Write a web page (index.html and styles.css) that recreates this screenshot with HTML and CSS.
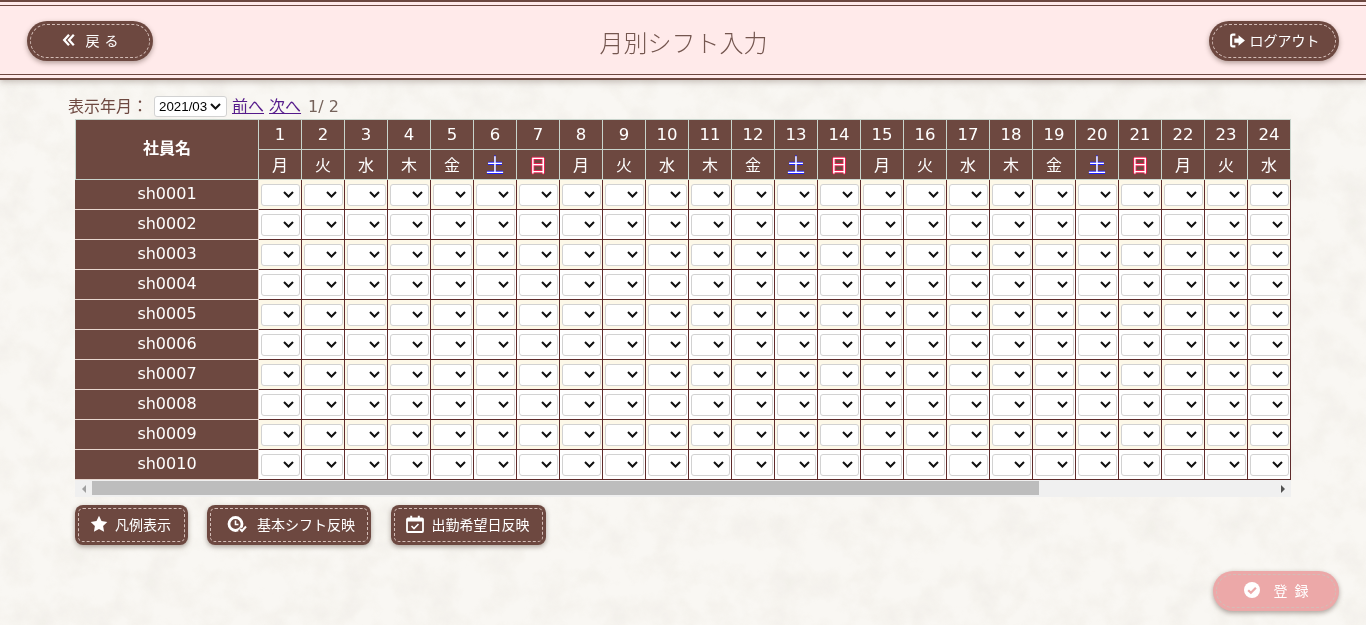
FILE: index.html
```html
<!DOCTYPE html>
<html lang="ja">
  <head>
    <meta charset="UTF-8" />
    <meta name="viewport" content="width=device-width, initial-scale=1.0" />
    <title>月別シフト入力</title>
    <link rel="stylesheet" href="styles.css">
  </head>
  <body>
    <svg class="paper" aria-hidden="true">
      <filter id="grain">
        <feTurbulence type="fractalNoise" baseFrequency="0.035" numOctaves="5" seed="7" />
        <feColorMatrix values="0 0 0 0 0.6  0 0 0 0 0.55  0 0 0 0 0.45  0.26 0 0 0 -0.1" />
      </filter>
      <rect width="100%" height="100%" filter="url(#grain)" />
    </svg>

    <header class="header">
      <div class="header-inner">
        <a class="btn btn-head btn-back" href="#">
          <svg class="icon" viewBox="0 0 16 16" width="14" height="14"><path d="M8 2 2.500 8 8 14M13.500 2 8 8l5.500 6" fill="none" stroke="currentColor" stroke-width="2.600" /></svg>
          <span class="spaced">戻る</span>
        </a>
        <h1 class="title">月別シフト入力</h1>
        <a class="btn btn-head btn-logout" href="#">
          <svg class="icon" viewBox="0 0 16 16" width="17" height="17"><path d="M6 2.500H3.500A1.500 1.500 0 0 0 2 4v8a1.500 1.500 0 0 0 1.500 1.500H6" fill="none" stroke="currentColor" stroke-width="2" /><path d="M9 3l6 5-6 5v-3H5V6h4z" fill="currentColor" /></svg>
          <span>ログアウト</span>
        </a>
      </div>
    </header>

    <main class="content">
      <div class="month-nav">
        <label for="month">表示年月：</label>
        <select id="month" class="month-select">
          <option>2021/03</option>
        </select>
        <a href="#">前へ</a>
        <a href="#">次へ</a>
        <span class="page">1/ 2</span>
      </div>

      <div class="table-wrap">
        <table class="shift-table" id="shift"></table>
      </div>
      <div class="scrollbar" aria-hidden="true">
        <span class="scroll-arrow scroll-left"></span>
        <span class="scroll-track"><span class="scroll-thumb"></span></span>
        <span class="scroll-arrow scroll-right"></span>
      </div>

      <div class="actions">
        <a class="btn btn-sub btn-legend" href="#">
          <svg class="icon" viewBox="0 0 18 18" width="18" height="18"><path d="M9 .8l2.500 5.300 5.800.8-4.200 4 1 5.800L9 14.100l-5.100 2.600 1-5.800-4.200-4 5.800-.8z" fill="currentColor" /></svg>
          <span>凡例表示</span>
        </a>
        <a class="btn btn-sub btn-basic" href="#">
          <svg class="icon" viewBox="0 0 21 18" width="21" height="18"><circle cx="8.500" cy="9" r="6.500" fill="none" stroke="currentColor" stroke-width="2.800" /><path d="M8.500 5.500V9.500h3" fill="none" stroke="currentColor" stroke-width="1.600" /><path d="M12.500 14l2.500 2.500 4.500-5" fill="none" stroke="#6d4840" stroke-width="4" /><path d="M13 14l2 2 4-4.500" fill="none" stroke="currentColor" stroke-width="2" /></svg>
          <span>基本シフト反映</span>
        </a>
        <a class="btn btn-sub btn-wish" href="#">
          <svg class="icon" viewBox="0 0 18 18" width="18" height="18"><path d="M2 3.500h14a1 1 0 0 1 1 1V16a1 1 0 0 1-1 1H2a1 1 0 0 1-1-1V4.500a1 1 0 0 1 1-1z" fill="none" stroke="currentColor" stroke-width="1.800" /><path d="M1 4h16v2.500H1zM4.200.8h2v4h-2zM11.800.8h2v4h-2z" fill="currentColor" /><path d="M5.500 11l2.500 2.500 4.500-4.500" fill="none" stroke="currentColor" stroke-width="1.600" /></svg>
          <span>出勤希望日反映</span>
        </a>
      </div>

      <div class="submit-row">
        <a class="btn btn-submit" href="#">
          <svg class="icon" viewBox="0 0 16 16" width="16" height="16"><circle cx="8" cy="8" r="8" fill="currentColor" /><path d="M4.200 8.200l2.700 2.600 5-5" fill="none" stroke="#eca8a8" stroke-width="2.200" /></svg>
          <span class="spaced-wide">登録</span>
        </a>
      </div>
    </main>

    <script src="script.js"></script>
  </body>
</html>
```

FILE: styles.css
```css
* {
  box-sizing: border-box;
}

html,
body {
  height: 100%;
}

body {
  margin: 0;
  overflow: hidden;
  background-color: #f9f7f3;
  color: #6d4840;
  font-family: "DejaVu Sans", "Noto Sans CJK JP", sans-serif;
  font-size: 16px;
}

.paper {
  position: fixed;
  top: 0;
  left: 0;
  width: 100%;
  height: 100%;
  z-index: -1;
}

.header {
  height: 80px;
  border-top: 2px solid #6d4840;
  border-bottom: 2px solid #6d4840;
  background-color: #ffeaea;
  box-shadow: 0 2px 6px rgba(80, 60, 50, 0.3);
}

.header-inner {
  display: flex;
  align-items: center;
  justify-content: space-between;
  height: 70px;
  margin-top: 3px;
  padding: 2px 27px 0;
  border-top: 1px solid #6d4840;
  border-bottom: 1px solid #6d4840;
}

.title {
  margin: 2px 0 0 5px;
  color: #74564f;
  font-family: "Noto Sans CJK JP", sans-serif;
  font-size: 24px;
  font-weight: 300;
  line-height: 1;
}

.btn {
  display: inline-flex;
  align-items: center;
  justify-content: center;
  height: 40px;
  padding-bottom: 2px;
  outline: 1px dashed #d3bdb7;
  outline-offset: -4px;
  background-color: #6d4840;
  color: #fff;
  font-family: "Noto Sans CJK JP", sans-serif;
  font-size: 14px;
  text-decoration: none;
  box-shadow: 0 2px 5px rgba(60, 40, 30, 0.4);
}

.btn-head {
  border-radius: 20px;
}

.btn-back {
  width: 126px;
  gap: 10px;
}

.btn-logout {
  width: 130px;
  gap: 4px;
}

.spaced {
  letter-spacing: 5px;
  margin-right: -5px;
}

.spaced-wide {
  letter-spacing: 7px;
  margin-right: -7px;
}

.content {
  padding: 14px 0 0 68px;
}

.month-nav {
  display: flex;
  align-items: center;
  height: 24px;
  margin-bottom: 1px;
  font-family: "Noto Sans CJK JP", sans-serif;
}

.month-nav label,
.month-nav a {
  padding-bottom: 2px;
}

.month-nav a {
  margin-left: 5px;
  color: #551a8b;
}

.page {
  margin-left: 7px;
  color: #75625a;
  font-family: "DejaVu Sans", sans-serif;
  font-size: 16px;
}

.month-select,
.shift-select {
  appearance: none;
  border: 1px solid #d2d2d2;
  border-radius: 3px;
  background-color: #fff;
  background-image: url("data:image/svg+xml,%3Csvg xmlns='http://www.w3.org/2000/svg' width='11' height='7'%3E%3Cpath d='M1 1l4.500 4.500L10 1' fill='none' stroke='%23111' stroke-width='2'/%3E%3C/svg%3E");
  background-repeat: no-repeat;
  background-position: right 5px center;
}

.month-select {
  width: 73px;
  height: 21px;
  margin-left: 6px;
  padding: 0 0 0 4px;
  color: #000;
  font-family: "Liberation Sans", sans-serif;
  font-size: 13.333px;
}

.table-wrap {
  width: 1216px;
  margin-left: 7px;
  overflow: hidden;
}

.shift-table {
  width: 1215px;
  border-collapse: collapse;
  table-layout: fixed;
}

.shift-table th {
  height: 30px;
  padding: 0;
  border: 1px solid #c8d4cc;
  background-color: #6d4840;
  color: #fff;
  font-weight: 400;
  font-size: 16px;
  text-align: center;
}

.shift-table .day {
  width: 43px;
  font-size: 16.5px;
}

.shift-table .name-head {
  width: 183px;
  padding-bottom: 6px;
  font-family: "Noto Sans CJK JP", sans-serif;
  font-size: 16px;
  font-weight: 700;
}

.shift-table .name {
  padding-bottom: 2px;
  border-color: #e8d8d0;
  border-left-color: #6d4840;
}

.shift-table .dow {
  padding-bottom: 2px;
  font-family: "Noto Sans CJK JP", sans-serif;
}

.shift-table .sat,
.shift-table .sun {
  font-size: 18px;
}

.shift-table .sat {
  text-shadow: 0 1px 0 #2020ff, 0 -1px 0 #2020ff;
}

.shift-table .sun {
  text-shadow: 1px 0 0 #e82050, -1px 0 0 #e82050, 0 1px 0 #e82050, 0 -1px 0 #e82050;
}

.shift-table td {
  height: 30px;
  padding: 0;
  border: 1px solid #5f2b2b;
  background-color: #fff;
  text-align: center;
}

.shift-table tr.odd td {
  background-color: #fdf8e8;
}

.shift-select {
  display: block;
  width: 39px;
  height: 22px;
  margin: 0 auto;
  padding: 0;
}

.scrollbar {
  display: flex;
  width: 1216px;
  height: 17px;
  margin-left: 7px;
  background-color: #f0f0f0;
}

.scroll-arrow {
  display: flex;
  flex: none;
  align-items: center;
  justify-content: center;
  width: 17px;
}

.scroll-left::before {
  content: "";
  border: 4px solid transparent;
  border-left-width: 0;
  border-right: 4px solid #a0a0a0;
}

.scroll-right::before {
  content: "";
  border: 4px solid transparent;
  border-right-width: 0;
  border-left: 4px solid #505050;
}

.scroll-track {
  display: block;
  flex: 1;
  padding: 1px 0 2px;
}

.scroll-thumb {
  display: block;
  width: 947px;
  height: 100%;
  background-color: #bdbdbd;
}

.actions {
  display: flex;
  margin: 8px 0 0 7px;
}

.btn-sub {
  gap: 7px;
  border-radius: 8px;
}

.btn-legend {
  width: 113px;
  margin-right: 19px;
  padding-right: 2px;
}

.btn-basic {
  width: 164px;
  margin-right: 20px;
  padding-left: 4px;
  gap: 9px;
}

.btn-wish {
  width: 155px;
  padding-right: 2px;
  gap: 8px;
}

.submit-row {
  display: flex;
  justify-content: flex-end;
  margin: 26px 27px 0 0;
}

.btn-submit {
  width: 126px;
  gap: 14px;
  border-radius: 20px;
  background-color: #eca8a8;
}
```

FILE: script.js
```js
var dowNames = ["日", "月", "火", "水", "木", "金", "土"];
var days = 24;
var staff = 10;

function buildHead() {
  var top = '<tr><th class="name-head" rowspan="2">社員名</th>';
  var bottom = "<tr>";

  for (var d = 1; d <= days; d++) {
    var dow = new Date(2021, 2, d).getDay();
    var cls = "dow";
    if (dow === 6) cls += " sat";
    if (dow === 0) cls += " sun";
    top += '<th class="day">' + d + "</th>";
    bottom += '<th class="' + cls + '">' + dowNames[dow] + "</th>";
  }

  return top + "</tr>" + bottom + "</tr>";
}

function buildRow(n) {
  var label = "sh" + String(n).padStart(4, "0");
  var row = '<tr class="' + (n % 2 ? "odd" : "even") + '">';
  row += '<th class="name">' + label + "</th>";

  for (var d = 1; d <= days; d++) {
    row += '<td><select class="shift-select"><option></option></select></td>';
  }

  return row + "</tr>";
}

var html = buildHead();
for (var i = 1; i <= staff; i++) {
  html += buildRow(i);
}
document.getElementById("shift").innerHTML = html;
```
